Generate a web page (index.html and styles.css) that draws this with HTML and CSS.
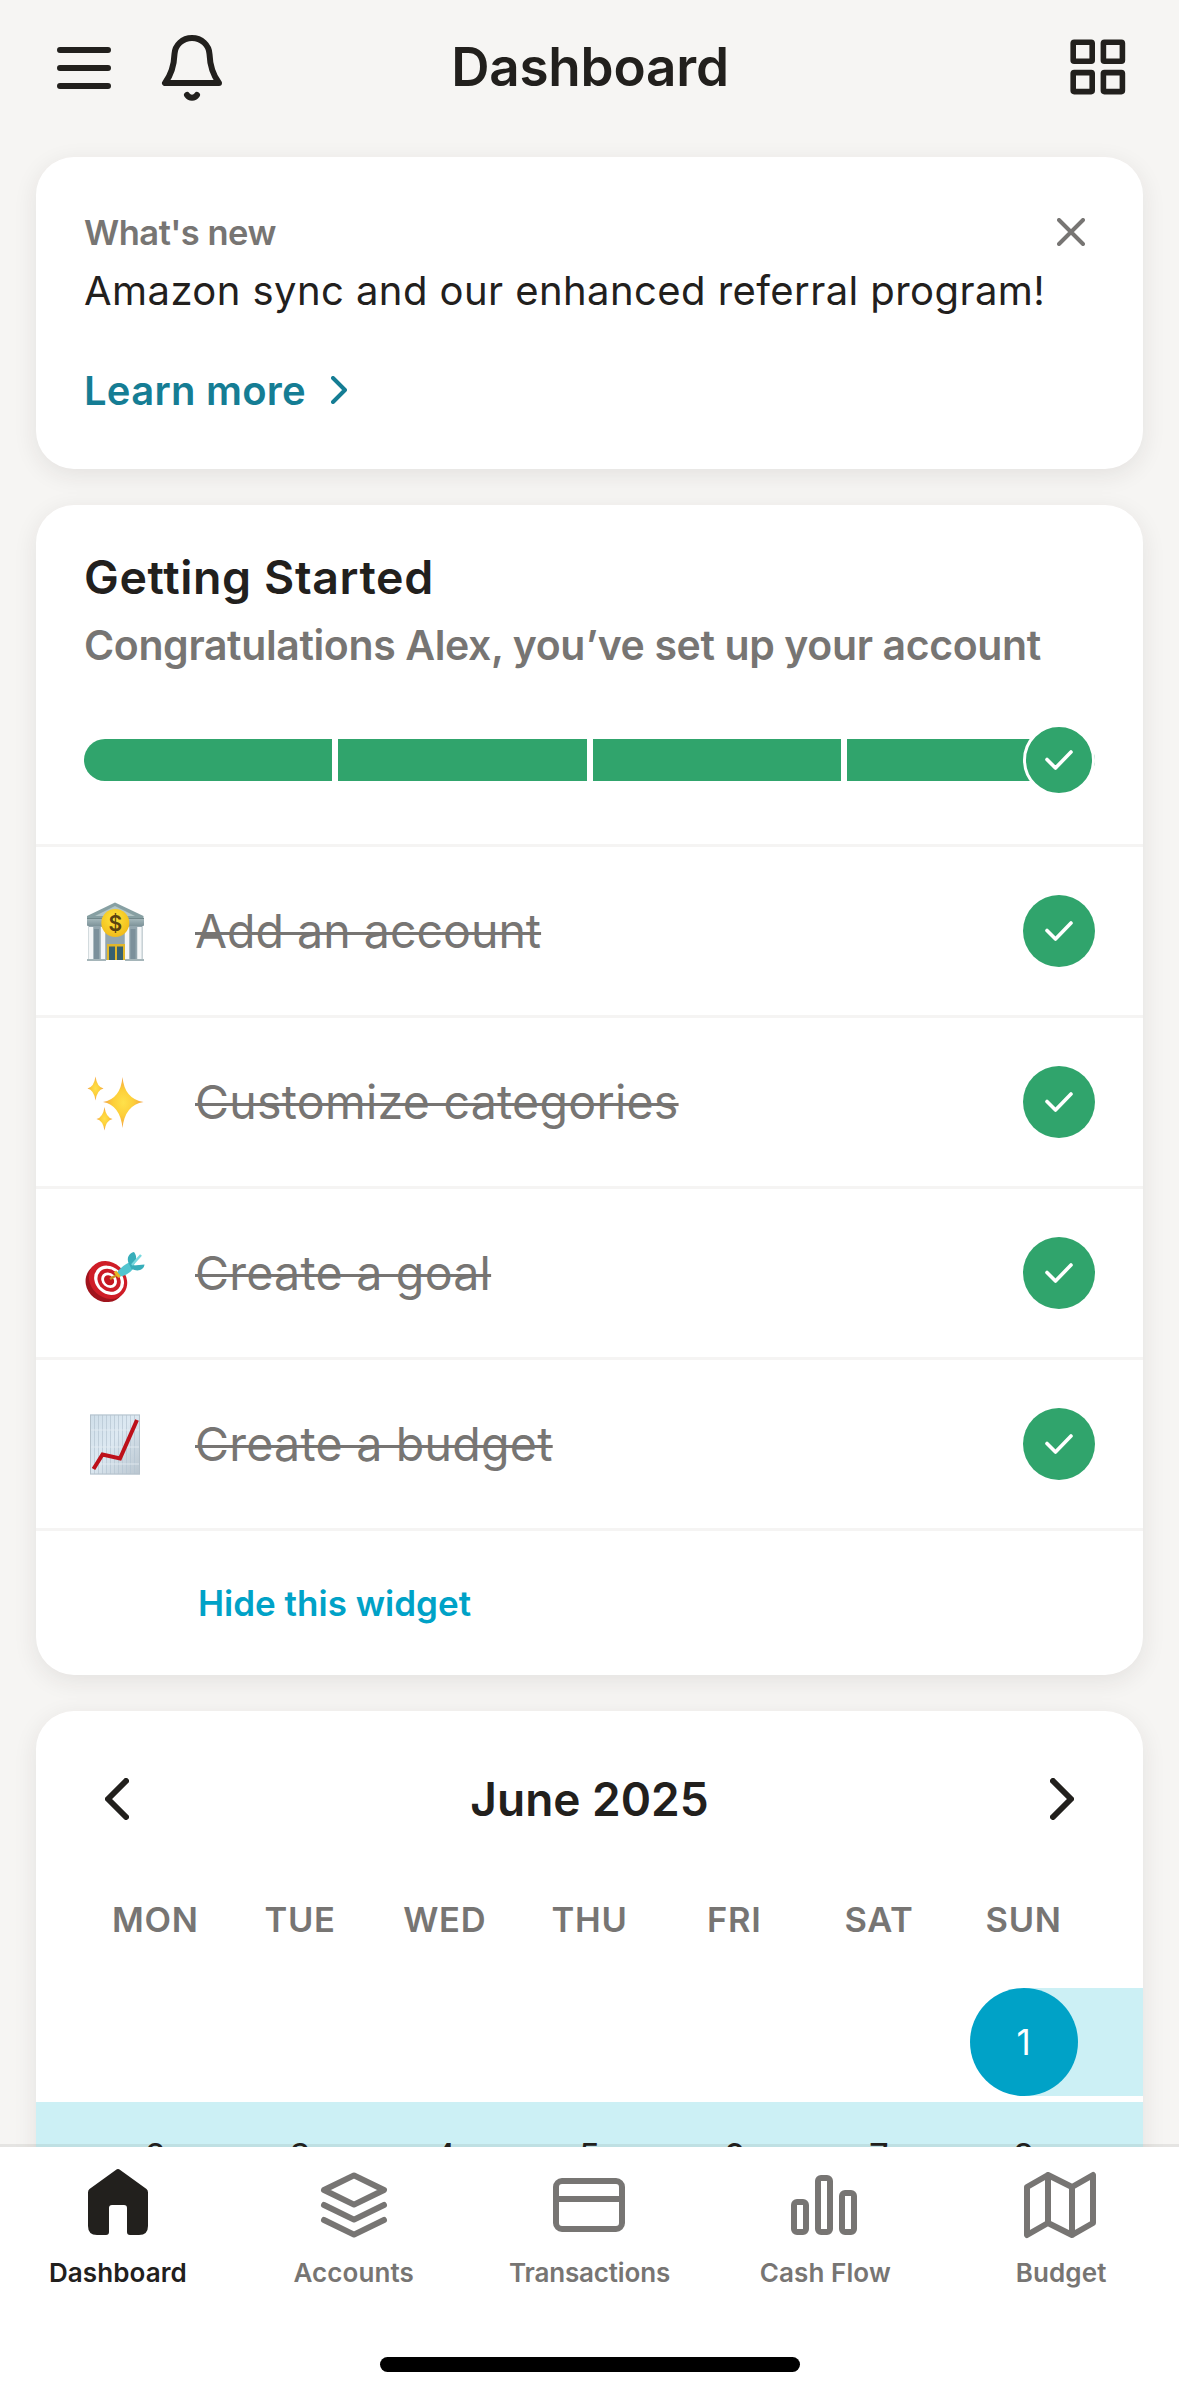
FILE: index.html
```html
<!DOCTYPE html>
<html lang="en">
<head>
<meta charset="utf-8">
<title>Dashboard</title>
<link rel="stylesheet" href="styles.css">
</head>
<body>
<div class="screen">
  <header class="topbar">
    <div class="topbar-left">
      <svg class="icon-menu" viewBox="0 0 54 42"><path d="M3 3H51M3 21H51M3 39H51"/></svg>
      <svg class="icon-bell" viewBox="0 0 72 72"><path d="M36 6C26.500 6 19 13 18.500 22C18 35 15 43 9 51H63C57 43 54 35 53.500 22C53 13 45.500 6 36 6Z"/><path d="M31 63C33.500 66.500 38.500 66.500 41 63"/></svg>
    </div>
    <h1 class="title">Dashboard</h1>
    <svg class="icon-grid" viewBox="0 0 56 56"><rect x="3.200" y="3.200" width="19" height="19" rx="1"/><rect x="33.400" y="3.200" width="19" height="19" rx="1"/><rect x="3.200" y="33.600" width="19" height="19" rx="1"/><rect x="33.400" y="33.600" width="19" height="19" rx="1"/></svg>
  </header>

  <main class="feed">
    <section class="card news">
      <div class="news-head">
        <span class="news-label">What's new</span>
        <svg class="icon-close" viewBox="0 0 28 28"><path d="M2 2L26 26M26 2L2 26"/></svg>
      </div>
      <p class="news-text">Amazon sync and our enhanced referral program!</p>
      <a class="news-link">Learn more<svg class="icon-go" viewBox="0 0 16 28"><path d="M2 2L14 14L2 26"/></svg></a>
    </section>

    <section class="card started">
      <div class="started-head">
        <h2 class="started-title">Getting Started</h2>
        <p class="started-sub">Congratulations Alex, you’ve set up your account</p>
        <div class="progress">
          <i class="seg"></i><i class="seg"></i><i class="seg"></i><i class="seg"></i>
          <span class="check check-end"><svg viewBox="0 0 28 20"><path d="M2 9.500L10.500 18L26 2"/></svg></span>
        </div>
      </div>
      <div class="task">
        <svg class="emoji" viewBox="0 0 64 64">
          <defs><linearGradient id="wall" x1="0" y1="0" x2="0" y2="1"><stop offset="0" stop-color="#a9bcc0"/><stop offset="1" stop-color="#7d9399"/></linearGradient><radialGradient id="coin" cx=".45" cy=".35" r=".7"><stop offset="0" stop-color="#ffe53a"/><stop offset="1" stop-color="#f0b818"/></radialGradient></defs>
          <rect x="4.500" y="25" width="54" height="36" fill="#93a6ae"/>
          <path d="M31 3.500L59.500 17V21H3V17Z" fill="#87a0a3"/><path d="M31 7L51 17H11Z" fill="#b3c6c6"/>
          <rect x="3" y="19" width="57" height="8" rx="1" fill="url(#wall)"/><path d="M3 19.500H60" stroke="#71888b" stroke-width="1"/>
          <path d="M12.500 30V60M49 30V60" stroke="#7b909b" stroke-width="5"/>
          <path d="M7 28V60M19 28V60M43 28V60M55.500 28V60" stroke="#f4f6f7" stroke-width="4.500"/>
          <rect x="23" y="45" width="18" height="16" fill="#e1b72b"/><path d="M25 47.500H31V61H25ZM33 47.500H39V61H33Z" fill="#38616f"/>
          <path d="M3 61H22M41 61H60" stroke="#a5b5b9" stroke-width="2"/>
          <circle cx="31.300" cy="24" r="14" fill="url(#coin)"/>
          <text x="31.300" y="31.500" text-anchor="middle" class="coin-text">$</text>
        </svg>
        <span class="task-name">Add an account</span>
        <span class="check"><svg viewBox="0 0 28 20"><path d="M2 9.500L10.500 18L26 2"/></svg></span>
      </div>
      <div class="task">
        <svg class="emoji" viewBox="0 0 64 64">
          <defs><radialGradient id="star"><stop offset="0" stop-color="#ffe14a"/><stop offset=".5" stop-color="#fdcf3a"/><stop offset="1" stop-color="#f3a245"/></radialGradient></defs>
          <g fill="url(#star)"><path d="M38.500 7Q40.500 29 59.500 32Q41 35 38.500 58Q36 35 19 32Q36.500 29 38.500 7Z"/><path d="M11.500 6.500Q13 17 19.500 18.500Q13 20 11.500 30.500Q10 20 3.500 18.500Q10 17 11.500 6.500Z"/><path d="M20.500 37Q22 47.500 28.500 49Q22 50.500 20.500 60.500Q19 50.500 12.500 49Q19 47.500 20.500 37Z"/></g>
        </svg>
        <span class="task-name wide">Customize categories</span>
        <span class="check"><svg viewBox="0 0 28 20"><path d="M2 9.500L10.500 18L26 2"/></svg></span>
      </div>
      <div class="task">
        <svg class="emoji" viewBox="0 0 64 64">
          <ellipse cx="21.500" cy="41.500" rx="20.500" ry="19" transform="rotate(38 21.500 41.500)" fill="#a0141d"/>
          <g transform="rotate(42 24 39)"><ellipse cx="24" cy="39" rx="20.500" ry="17.500" fill="#cf1d27"/><ellipse cx="25" cy="38.500" rx="16" ry="13.500" fill="#fff"/><ellipse cx="25" cy="38.500" rx="12.500" ry="10.500" fill="#cb1b26"/><ellipse cx="25" cy="38.500" rx="8.500" ry="7" fill="#fff"/><ellipse cx="25" cy="38.500" rx="5.500" ry="4.500" fill="#c4161f"/></g>
          <path d="M26 38L36 32" stroke="#c98f1e" stroke-width="2.500"/>
          <path d="M32 33Q37 25 46 21L51 25Q46 34 36 35.500Z" fill="#52c4cf"/>
          <path d="M45 23C42 17 45 12 50 11C53 15 53 19 49.500 24.500L60.500 23.500C60 29 54 31 47.500 28Z" fill="#37aeba"/><path d="M48 24L57 14" stroke="#78d9df" stroke-width="2.500"/>
          <path d="M31 30.500L35.500 36" stroke="#e9b523" stroke-width="3"/>
        </svg>
        <span class="task-name wide">Create a goal</span>
        <span class="check"><svg viewBox="0 0 28 20"><path d="M2 9.500L10.500 18L26 2"/></svg></span>
      </div>
      <div class="task">
        <svg class="emoji" viewBox="0 0 64 64">
          <defs><linearGradient id="sheet" x1="0" y1="0" x2="1" y2="1"><stop offset="0" stop-color="#cfdee9"/><stop offset=".45" stop-color="#dde9f2"/><stop offset="1" stop-color="#b9c5cf"/></linearGradient></defs>
          <rect x="6" y="2.500" width="50" height="60" fill="url(#sheet)"/>
          <path d="M10.500 3V62M14.500 3V62M18.500 3V62M22.500 3V62M26.500 3V62M30.500 3V62M34.500 3V62M38.500 3V62M42.500 3V62M46.500 3V62M50.500 3V62" stroke="#b4c4d1" stroke-width=".7"/><path d="M6 18H56M6 35H56M6 52H56" stroke="#e6eef4" stroke-width=".8"/>
          <rect x="6.500" y="3" width="49" height="59" fill="none" stroke="#b4c1cb"/>
          <path d="M9.500 57L18.500 42.500L36 46.500L53 8" fill="none" stroke="#bd101a" stroke-width="4"/>
        </svg>
        <span class="task-name wide">Create a budget</span>
        <span class="check"><svg viewBox="0 0 28 20"><path d="M2 9.500L10.500 18L26 2"/></svg></span>
      </div>
      <div class="hide-row"><a class="hide-link">Hide this widget</a></div>
    </section>

    <section class="card calendar">
      <div class="cal-head">
        <svg class="icon-nav" viewBox="0 0 24 42"><path d="M21 3L3 21L21 39"/></svg>
        <span class="cal-title">June 2025</span>
        <svg class="icon-nav" viewBox="0 0 24 42"><path d="M3 3L21 21L3 39"/></svg>
      </div>
      <div class="week weekdays"><span>MON</span><span>TUE</span><span>WED</span><span>THU</span><span>FRI</span><span>SAT</span><span>SUN</span></div>
      <div class="week days first"><span></span><span></span><span></span><span></span><span></span><span></span><span class="today">1</span></div>
      <div class="week days full"><span>2</span><span>3</span><span>4</span><span>5</span><span>6</span><span>7</span><span>8</span></div>
    </section>
  </main>

  <nav class="tabs">
    <div class="tab-row">
      <a class="tab active"><svg viewBox="0 0 72 72"><path class="solid" d="M33.800 1Q36 -1 38.200 1L64.500 20Q66 21.300 66 23.500V57Q66 66 57 66H48Q45 66 45 63V39Q45 36 42 36H30Q27 36 27 39V63Q27 66 24 66H15Q6 66 6 57V23.500Q6 21.300 7.500 20Z"/></svg><span>Dashboard</span></a>
      <a class="tab"><svg viewBox="0 0 72 72"><path d="M36 6.400L66 21L36 35.600L6 21ZM6 36L36 50.600L66 36M6 51L36 65.600L66 51"/></svg><span>Accounts</span></a>
      <a class="tab"><svg viewBox="0 0 72 72"><rect x="3" y="12" width="66" height="48" rx="6"/><path d="M3 30H69"/></svg><span class="snug">Transactions</span></a>
      <a class="tab"><svg viewBox="0 0 72 72"><rect x="5" y="33" width="12" height="30" rx="3"/><rect x="29" y="9" width="12" height="54" rx="3"/><rect x="53" y="24" width="12" height="39" rx="3"/></svg><span>Cash Flow</span></a>
      <a class="tab"><svg viewBox="0 0 72 72"><path d="M2 18L23 6L47 18L68 6V54L47 66L23 54L2 66ZM23 6V54M47 18V66"/></svg><span>Budget</span></a>
    </div>
    <div class="home-bar"></div>
  </nav>
</div>
</body>
</html>
```

FILE: styles.css
```css
* { box-sizing: border-box; }
body, h1, h2, p { margin: 0; font-weight: inherit; }
body { font-family: Inter, "Liberation Sans", sans-serif; color: #22201d; background: #f6f5f3; }
svg { display: block; fill: none; stroke: currentColor; stroke-linecap: round; stroke-linejoin: round; flex: none; }

.screen { width: 1179px; height: 2396px; overflow: hidden; display: flex; flex-direction: column; }

.topbar { height: 133px; flex: none; display: grid; grid-template-columns: 1fr auto 1fr; align-items: center; padding: 0 53px 0 57px; }
.topbar-left { display: flex; align-items: center; gap: 45px; padding-top: 3px; }
.icon-menu { width: 54px; height: 42px; stroke-width: 6; }
.icon-bell { width: 72px; height: 72px; stroke-width: 6; }
.icon-grid { width: 56px; height: 56px; stroke-width: 5.6; justify-self: end; }
.title { font-size: 53px; font-weight: 600; line-height: 60px; letter-spacing: -.2px; margin-left: -3px; }

.feed { flex: 1; min-height: 0; overflow: hidden; padding: 24px 36px 0; display: flex; flex-direction: column; gap: 36px; }
.card { flex: none; background: #fff; border-radius: 38px; box-shadow: 0 6px 24px rgba(40, 35, 30, .09); }

.news { height: 312px; padding: 50px 58px 0 48px; }
.news-head { display: flex; justify-content: space-between; align-items: center; height: 50px; color: #777573; }
.news-label { font-size: 34.5px; font-weight: 600; letter-spacing: -.5px; }
.icon-close { width: 28px; height: 28px; stroke-width: 4; }
.news-text { font-size: 40px; line-height: 68px; letter-spacing: .43px; white-space: nowrap; }
.news-link { display: flex; align-items: center; gap: 25px; height: 50px; margin-top: 40px; font-size: 40px; font-weight: 600; letter-spacing: .25px; color: #157d94; }
.icon-go { width: 16px; height: 28px; stroke-width: 4; }

.started { height: 1170px; }
.started-head { height: 339px; padding: 42px 48px 0; }
.started-title { font-size: 46.5px; font-weight: 600; line-height: 60px; letter-spacing: .62px; }
.started-sub { margin-top: 13px; font-size: 41px; font-weight: 600; line-height: 50px; letter-spacing: -.38px; color: #777573; white-space: nowrap; }
.progress { position: relative; display: flex; align-items: center; gap: 6px; height: 72px; margin-top: 54px; }
.seg { flex: 1; height: 42px; background: #30a46c; }
.seg:first-child { border-radius: 21px 0 0 21px; }
.seg:nth-child(4) { border-radius: 0 21px 21px 0; }
.check { width: 72px; height: 72px; flex: none; border-radius: 50%; background: #30a46c; color: #fff; display: flex; align-items: center; justify-content: center; margin-left: auto; }
.check svg { width: 28px; height: 20px; stroke-width: 3.6; }
.check-end { position: absolute; right: 0; top: 0; border: 3px solid #fff; }
.task { display: flex; align-items: center; height: 171px; border-top: 3px solid #f5f4f3; padding: 0 48px; }
.emoji { width: 64px; height: 64px; margin-right: 47px; stroke: none; stroke-linecap: butt; stroke-linejoin: miter; }
.coin-text { font: 600 21px Inter, sans-serif; fill: #5a4310; }
.task-name { font-size: 46.5px; color: #777573; text-decoration: line-through; text-decoration-thickness: 3px; }
.task-name.wide { letter-spacing: .26px; }
.hide-row { height: 147px; border-top: 3px solid #f5f4f3; padding-left: 162px; display: flex; align-items: center; }
.hide-link { font-size: 35px; font-weight: 600; color: #00a2c7; }

.cal-head { height: 175px; padding: 0 69px; display: flex; align-items: center; justify-content: space-between; }
.cal-title { font-size: 46px; font-weight: 600; }
.icon-nav { width: 24px; height: 42px; stroke-width: 6; }
.week { display: grid; grid-template-columns: repeat(7, 1fr); justify-items: center; padding: 0 47px; }
.weekdays { line-height: 65px; margin: 1px 0 36px; font-size: 34.5px; font-weight: 600; letter-spacing: .7px; color: #777573; }
.days { height: 108px; line-height: 108px; margin-bottom: 6px; font-size: 35px; }
.first { background: linear-gradient(to right, transparent 987px, #ccf0f5 987px); }
.full { background: #ccf0f5; }
.today { width: 108px; height: 108px; border-radius: 50%; background: #00a2c7; color: #fff; text-align: center; }

.tabs { position: relative; flex: none; height: 252px; margin-top: -3px; background: #fff; background-clip: padding-box; border-top: 3px solid rgba(34, 32, 29, .08); padding-top: 22px; }
.tab-row { display: grid; grid-template-columns: repeat(5, 1fr); }
.tab { display: flex; flex-direction: column; align-items: center; gap: 17px; color: #777573; font-size: 26px; font-weight: 600; line-height: 30px; letter-spacing: .1px; }
.tab svg { width: 72px; height: 72px; stroke-width: 6; overflow: visible; }
.tab .solid { fill: currentColor; stroke: none; }
.snug { letter-spacing: -.16px; }
.active { color: #22201d; }
.home-bar { width: 420px; height: 15px; margin: 69px auto 0; border-radius: 8px; background: #000; }
```
